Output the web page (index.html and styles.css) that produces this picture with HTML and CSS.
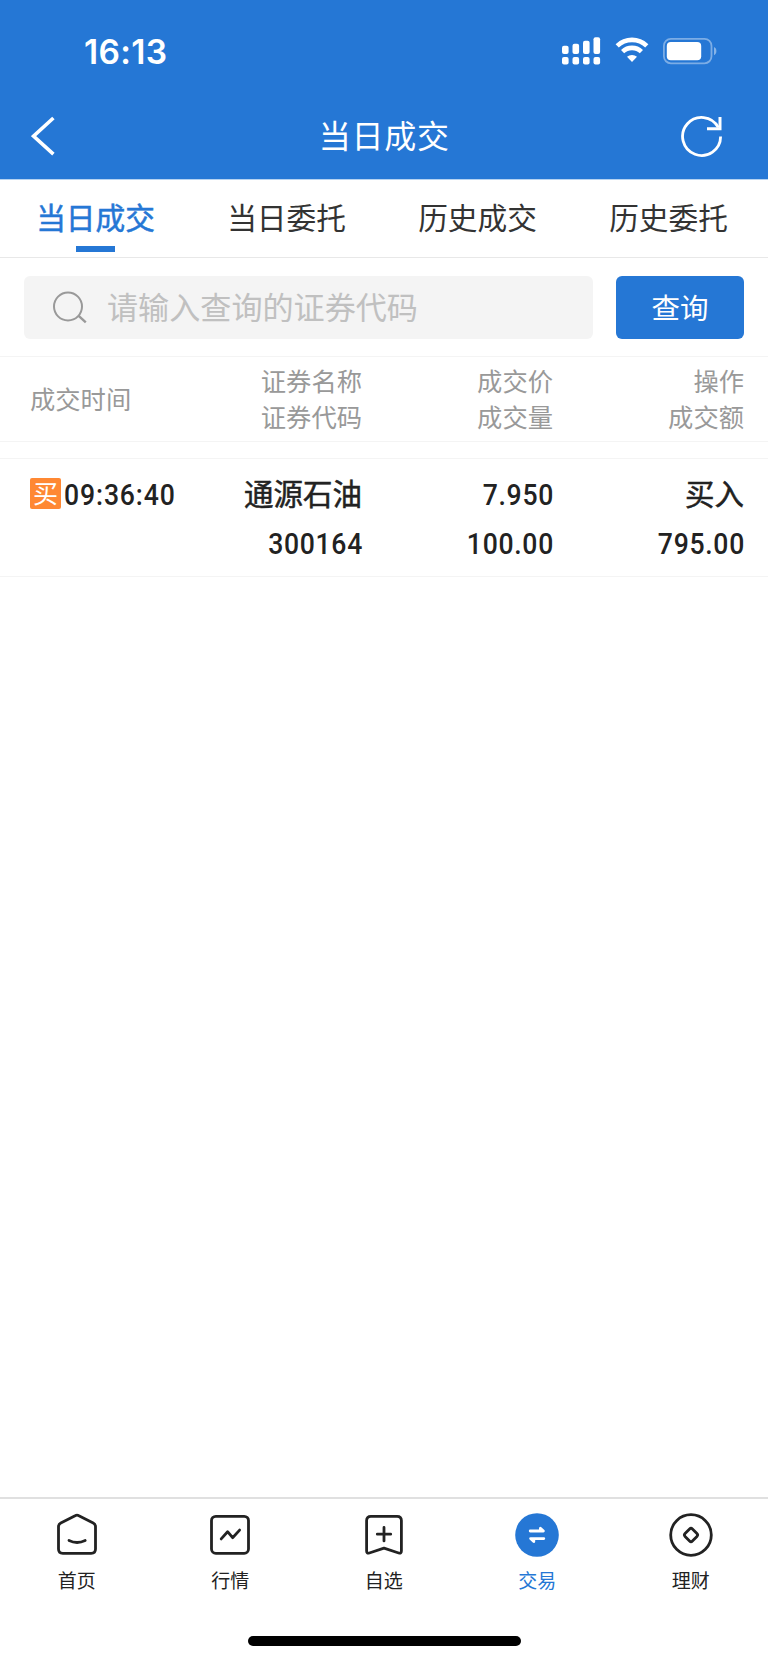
FILE: index.html
```html
<!DOCTYPE html>
<html lang="zh-CN">
  <head>
    <meta charset="UTF-8" />
    <meta name="viewport" content="width=device-width, initial-scale=1.0" />
    <title>当日成交</title>
    <link rel="stylesheet" href="styles.css">
  </head>
  <body>
    <header class="header">
      <div class="status">
        <span class="time">16:13</span>
        <div class="status_icons">
          <svg width="39" height="28" viewBox="0 0 39 28" fill="#fff">
            <rect x="0" y="8.8" width="6.6" height="8.2" rx="2" />
            <rect x="10.5" y="6.8" width="6.6" height="10.2" rx="2" />
            <rect x="21" y="3.8" width="6.6" height="13.2" rx="2" />
            <rect x="31.5" y="0.2" width="6.6" height="16.8" rx="2" />
            <rect x="0" y="20" width="6.6" height="7.6" rx="2" />
            <rect x="10.5" y="20" width="6.6" height="7.6" rx="2" />
            <rect x="21" y="20" width="6.6" height="7.6" rx="2" />
            <rect x="31.5" y="20" width="6.6" height="7.6" rx="2" />
          </svg>
          <svg class="wifi" width="34" height="26" viewBox="0 0 34 26" fill="none" stroke="#fff" stroke-width="4.6">
            <path d="M2.2 8.8a21.4 21.4 0 0 1 29.6 0" />
            <path d="M7.6 14.6a13.6 13.6 0 0 1 18.8 0" />
            <path d="M17 25l-5-5.2a7.6 7.6 0 0 1 10 0z" fill="#fff" stroke="none" />
          </svg>
          <svg class="battery" width="55" height="27" viewBox="0 0 55 27">
            <rect x="0.9" y="0.9" width="47.6" height="24.4" rx="7" fill="none" stroke="#fff" stroke-opacity=".4" stroke-width="1.8" />
            <rect x="3.8" y="4" width="34.4" height="18.2" rx="4" fill="#fff" />
            <path d="M51 9c3.2 1.2 3.2 7 0 8.2z" fill="#fff" fill-opacity=".45" />
          </svg>
        </div>
      </div>
      <div class="title_bar">
        <svg class="back" width="26" height="40" viewBox="0 0 26 40" fill="none" stroke="#fff" stroke-width="3.6">
          <path d="M22.4 2L2.5 20.1L22.4 38.2" />
        </svg>
        <h1>当日成交</h1>
        <svg class="refresh" width="42" height="42" viewBox="0 0 42 42" fill="none" stroke="#fff" stroke-width="2.8">
          <path d="M39.6 21.4A19 19 0 1 1 37.3 12.4" />
          <path d="M39 2v11.8H26" stroke-width="3" />
        </svg>
      </div>
    </header>
    <nav class="tabs">
      <a class="on">当日成交</a>
      <a>当日委托</a>
      <a>历史成交</a>
      <a>历史委托</a>
    </nav>
    <div class="search">
      <div class="search_input">
        <svg width="34" height="33" viewBox="0 0 34 33" fill="none" stroke="#999" stroke-width="2">
          <circle cx="15" cy="15.5" r="14" />
          <path d="M25.4 24.7l7.4 6.6" stroke-width="2.4" />
        </svg>
        <span>请输入查询的证券代码</span>
      </div>
      <button>查询</button>
    </div>
    <main>
      <div class="row row_head">
        <div>成交时间</div>
        <div>证券名称<br>证券代码</div>
        <div>成交价<br>成交量</div>
        <div>操作<br>成交额</div>
      </div>
      <div class="row row_data">
        <div class="deal_time"><i>买</i><span class="num">09:36:40</span></div>
        <div><b>通源石油</b><span class="num">300164</span></div>
        <div><span class="num">7.950</span><span class="num">100.00</span></div>
        <div><b>买入</b><span class="num">795.00</span></div>
      </div>
    </main>
    <footer class="bottom">
      <div class="menu">
        <a>
          <svg width="44" height="44" viewBox="0 0 44 44">
            <path d="M20.6 2.5q1.4-.8 2.8 0L38.2 10q2.3 1.2 2.3 3.6V36q0 4.3-4.3 4.3H7.8Q3.5 40.3 3.5 36V13.6q0-2.4 2.3-3.6z" />
            <path d="M14 27.5q8 4 16.2 0" />
          </svg>
          <span>首页</span>
        </a>
        <a>
          <svg width="44" height="44" viewBox="0 0 44 44">
            <rect x="3.5" y="3.3" width="37" height="37" rx="4.3" />
            <path d="M13.2 25.9l6.400-7.200 5 6 7-7.600" />
          </svg>
          <span>行情</span>
        </a>
        <a>
          <svg width="44" height="44" viewBox="0 0 44 44">
            <path d="M8.900 3.300h26.200q4.300 0 4.300 4.300v30.400q0 2.800-2.700 2L22 35.200 7.300 40q-2.700.8-2.700-2V7.600q0-4.300 4.300-4.300z" />
            <path d="M15.300 21.200h13.400M22 14.500v13.400" />
          </svg>
          <span>自选</span>
        </a>
        <a class="on">
          <svg width="44" height="44" viewBox="0 0 44 44">
            <circle cx="22" cy="22" r="21.8" fill="#2577d5" stroke="none" />
            <path d="M15.200 18h13.200l-3-2.800v2.500M28.800 25.600H15.600l3.200 3v-2.500" stroke="#fff" stroke-width="2.800" fill="#fff" />
          </svg>
          <span>交易</span>
        </a>
        <a>
          <svg width="44" height="44" viewBox="0 0 44 44">
            <circle cx="22" cy="22" r="20.3" />
            <rect x="16.800" y="16.800" width="10.400" height="10.400" rx="2" transform="rotate(45 22 22)" />
          </svg>
          <span>理财</span>
        </a>
      </div>
      <div class="home_bar"></div>
    </footer>
  </body>
</html>
```

FILE: styles.css
```css
* {
  margin: 0;
  padding: 0;
  box-sizing: border-box;
}
body {
  display: flex;
  flex-direction: column;
  height: 1663px;
  font-family: "Noto Sans CJK SC", sans-serif;
  color: #222;
  background-color: #fff;
}
svg {
  display: block;
  flex: none;
}
.header {
  height: 179px;
  color: #fff;
  background-color: #2577d5;
}
.status {
  display: flex;
  justify-content: space-between;
  height: 94px;
  padding: 0 50.5px 0 84px;
}
.time {
  padding-top: 32px;
  font-family: Inter, sans-serif;
  font-size: 33.5px;
  font-weight: 600;
  line-height: 41px;
  letter-spacing: 0.3px;
}
.status_icons {
  display: flex;
  padding-top: 37.4px;
}
.wifi {
  margin-left: 14px;
}
.battery {
  margin: 1px 0 0 14px;
}
.title_bar {
  display: flex;
  align-items: center;
  justify-content: space-between;
  height: 84px;
  padding: 0 44.5px 0 31px;
}
.title_bar h1 {
  padding: 0 0 4px 30px;
  font-size: 32px;
  font-weight: 400;
  line-height: 48px;
  letter-spacing: 0.8px;
}
.tabs {
  display: grid;
  grid-template-columns: repeat(4, 191px);
  height: 79px;
  border-top: 1px solid #b5d2f1;
  border-bottom: 1px solid #e8e8e8;
}
.tabs a {
  position: relative;
  font-size: 29.7px;
  line-height: 73px;
  text-align: center;
  color: #333;
}
.tabs a.on {
  color: #2577d5;
  -webkit-text-stroke: 0.5px #2577d5;
}
.tabs a.on::after {
  content: "";
  position: absolute;
  left: 76px;
  bottom: 5px;
  width: 39px;
  height: 6px;
  background-color: #2577d5;
}
.search {
  display: flex;
  gap: 23.5px;
  height: 98px;
  padding: 18px 24px 0;
}
.search_input {
  display: flex;
  flex: 1;
  align-items: center;
  height: 63px;
  padding-left: 29px;
  border-radius: 6px;
  font-size: 31.1px;
  color: #c0c0c0;
  background-color: #f4f4f4;
}
.search_input span {
  margin: -4px 0 0 20px;
}
.search button {
  width: 128px;
  height: 63px;
  padding-bottom: 2px;
  border: 0;
  border-radius: 6px;
  font-family: inherit;
  font-size: 28.5px;
  color: #fff;
  background-color: #2577d5;
}
.row {
  display: grid;
  grid-template-columns: 171px 161px 191px 191px;
  padding: 0 24px 0 30px;
  border-top: 1px solid #f4f4f4;
  border-bottom: 1px solid #f4f4f4;
  text-align: right;
}
.row > div:first-child {
  text-align: left;
}
.row_head {
  align-items: center;
  height: 86px;
  padding-bottom: 2px;
  font-size: 25.3px;
  line-height: 36.5px;
  color: #999;
}
.row_data {
  height: 119px;
  margin-top: 16px;
  padding-top: 11px;
}
.row_data b,
.row_data .num {
  display: block;
  height: 49px;
}
.row_data b {
  font-size: 29.5px;
  font-weight: 400;
  line-height: 45px;
  -webkit-text-stroke: 0.5px #222;
}
/* narrow digits, stuck to the right edge of the column */
.row_data .num {
  margin-right: -1px;
  font-family: Roboto, sans-serif;
  font-size: 29.5px;
  font-weight: 500;
  line-height: 50px;
  letter-spacing: 0.8px;
  transform: scaleX(0.9);
  transform-origin: right;
}
.row_data .deal_time {
  display: flex;
}
.row_data .deal_time .num {
  letter-spacing: 1px;
  transform-origin: left;
}
.deal_time i {
  width: 31px;
  height: 31px;
  margin: 8px 3px 0 0;
  border-radius: 2px;
  font-size: 25px;
  font-style: normal;
  line-height: 28px;
  text-align: center;
  color: #fff;
  background-color: #ff8833;
}
.bottom {
  height: 166px;
  margin-top: auto;
  border-top: 2px solid #e0e0e0;
}
.menu {
  display: grid;
  grid-template-columns: repeat(5, 1fr);
  height: 137px;
  padding: 14.4px 0.5px 0 0;
}
.menu a {
  display: flex;
  flex-direction: column;
  align-items: center;
  font-size: 19px;
  line-height: 28px;
}
.menu a.on {
  color: #2577d5;
}
.menu svg {
  margin-bottom: 9px;
  fill: none;
  stroke: #222;
  stroke-width: 2.8;
  stroke-linecap: round;
  stroke-linejoin: round;
}
.home_bar {
  width: 273px;
  height: 10px;
  margin: 0 auto;
  border-radius: 5px;
  background-color: #000;
}
```
